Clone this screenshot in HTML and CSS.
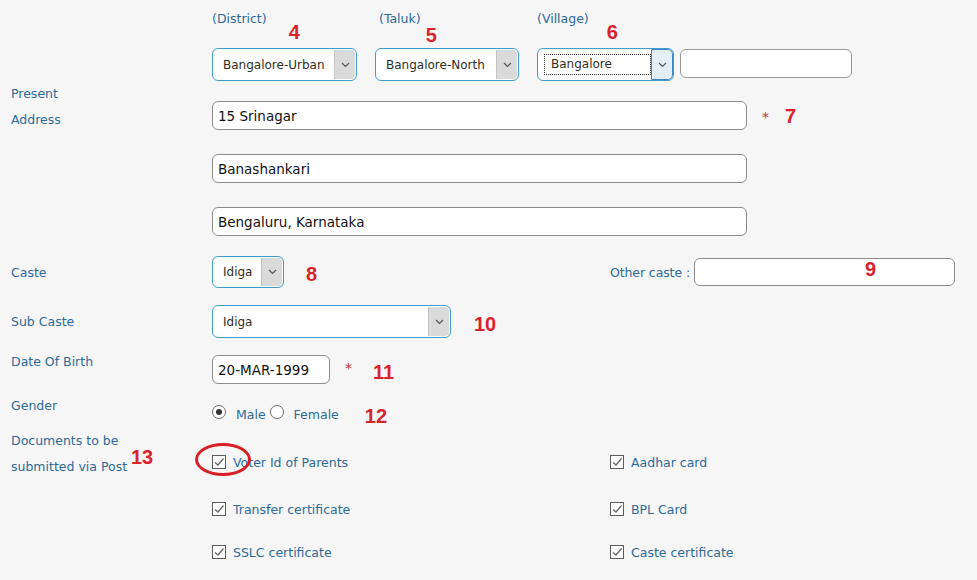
FILE: index.html
```html
<!DOCTYPE html>
<html lang="en">
<head>
    <meta charset="UTF-8">
    <title>Applicant Details</title>
    <link rel="stylesheet" href="styles.css">
</head>
<body>
    <div class="form">
        <!-- location -->
        <div class="row row-loc">
            <div class="label"></div>
            <div class="loc">
                <div class="loc-col col-district">
                    <div class="loc-head"><span class="hint">(District)</span><span class="mark m4">4</span></div>
                    <div class="select w-district"><span class="value">Bangalore-Urban</span><span class="arrow"><svg width="9" height="6" viewBox="0 0 9 6"><polyline points="1,1 4.5,4.5 8,1" /></svg></span></div>
                </div>
                <div class="loc-col col-taluk">
                    <div class="loc-head"><span class="hint hint-taluk">(Taluk)</span><span class="mark m5">5</span></div>
                    <div class="select w-taluk"><span class="value">Bangalore-North</span><span class="arrow"><svg width="9" height="6" viewBox="0 0 9 6"><polyline points="1,1 4.5,4.5 8,1" /></svg></span></div>
                </div>
                <div class="loc-col col-village">
                    <div class="loc-head"><span class="hint">(Village)</span><span class="mark m6">6</span></div>
                    <div class="loc-pair">
                        <div class="select w-village focused"><span class="value"><span class="focus-ring">Bangalore</span></span><span class="arrow"><svg width="9" height="6" viewBox="0 0 9 6"><polyline points="1,1 4.5,4.5 8,1" /></svg></span></div>
                        <div class="input w-village-extra"></div>
                    </div>
                </div>
            </div>
        </div>

        <!-- address -->
        <div class="row row-address">
            <div class="label label-lines">Present<br>Address</div>
            <div class="address">
                <div class="field"><div class="input w-address">15 Srinagar</div><span class="req">*</span><span class="mark m7">7</span></div>
                <div class="field"><div class="input w-address">Banashankari</div></div>
                <div class="field"><div class="input w-address">Bengaluru, Karnataka</div></div>
            </div>
        </div>

        <!-- caste -->
        <div class="row row-caste">
            <div class="label">Caste</div>
            <div class="col-left">
                <div class="select w-caste"><span class="value">Idiga</span><span class="arrow"><svg width="9" height="6" viewBox="0 0 9 6"><polyline points="1,1 4.5,4.5 8,1" /></svg></span></div>
                <span class="mark m8">8</span>
            </div>
            <div class="col-right other">
                <span class="other-label">Other caste :</span>
                <div class="input w-other"><span class="mark m9">9</span></div>
            </div>
        </div>

        <!-- sub caste -->
        <div class="row row-subcaste">
            <div class="label">Sub Caste</div>
            <div class="select w-subcaste"><span class="value">Idiga</span><span class="arrow"><svg width="9" height="6" viewBox="0 0 9 6"><polyline points="1,1 4.5,4.5 8,1" /></svg></span></div>
            <span class="mark m10">10</span>
        </div>

        <!-- dob -->
        <div class="row row-dob">
            <div class="label">Date Of Birth</div>
            <div class="input w-dob">20-MAR-1999</div>
            <span class="req req-dob">*</span>
            <span class="mark m11">11</span>
        </div>

        <!-- gender -->
        <div class="row row-gender">
            <div class="label">Gender</div>
            <div class="gender">
                <span class="radio checked"></span><span class="opt opt-male">Male</span>
                <span class="radio"></span><span class="opt opt-female">Female</span>
                <span class="mark m12">12</span>
            </div>
        </div>

        <!-- documents -->
        <div class="row row-docs">
            <div class="label label-lines">Documents to be<br>submitted via Post<span class="mark m13">13</span></div>
            <div class="docs">
                <div class="doc"><span class="check"><svg width="12" height="12" viewBox="0 0 12 12"><polyline points="2,6.5 5,9 10.5,2.5" /></svg></span><span class="doc-text">Voter Id of Parents</span><span class="circle"></span></div>
                <div class="doc"><span class="check"><svg width="12" height="12" viewBox="0 0 12 12"><polyline points="2,6.5 5,9 10.5,2.5" /></svg></span><span class="doc-text">Aadhar card</span></div>
                <div class="doc"><span class="check"><svg width="12" height="12" viewBox="0 0 12 12"><polyline points="2,6.5 5,9 10.5,2.5" /></svg></span><span class="doc-text">Transfer certificate</span></div>
                <div class="doc"><span class="check"><svg width="12" height="12" viewBox="0 0 12 12"><polyline points="2,6.5 5,9 10.5,2.5" /></svg></span><span class="doc-text">BPL Card</span></div>
                <div class="doc"><span class="check"><svg width="12" height="12" viewBox="0 0 12 12"><polyline points="2,6.5 5,9 10.5,2.5" /></svg></span><span class="doc-text">SSLC certificate</span></div>
                <div class="doc"><span class="check"><svg width="12" height="12" viewBox="0 0 12 12"><polyline points="2,6.5 5,9 10.5,2.5" /></svg></span><span class="doc-text">Caste certificate</span></div>
            </div>
        </div>
    </div>
</body>
</html>
```

FILE: styles.css
```css
body { margin: 0; background-color: #f6f6f6; font-family: "DejaVu Sans", Verdana, sans-serif; font-size: 12.5px; color: #2c6a99; overflow: hidden; }
.form { padding-left: 11px; }
.row { display: flex; }
.label { width: 201px; flex-shrink: 0; color: #2c6a99; }
.label-lines { line-height: 26px; }

/* red annotation numbers */
.mark { font-family: "Liberation Sans", Arial, sans-serif; font-weight: bold; font-size: 20px; color: #d8232c; line-height: 20px; }
.req { color: #c9302c; font-size: 14px; line-height: 14px; }

/* fake select */
.select { display: flex; align-items: stretch; height: 33px; box-sizing: border-box; border: 1px solid #3f9cc8; border-radius: 6px; background: #fff; overflow: hidden; font-size: 12px; color: #2e2e1e; }
.select .value { flex: 1; display: flex; align-items: center; padding-left: 10px; white-space: nowrap; overflow: hidden; }
.select .arrow { width: 20px; margin: 1px 1px 1px 0; display: flex; align-items: center; justify-content: center; background: #dadada; border-left: 1px solid #c4c4c4; border-radius: 0 4px 4px 0; }
.select .arrow polyline { fill: none; stroke: #555; stroke-width: 1.2; }
.select.focused .value { padding-left: 6px; }
.focus-ring { border: 1px dotted #333; padding: 2px 6px 3px 6px; width: 94px; }
.select.focused .arrow { background: #e4eef7; border: 1px solid #3a86c8; margin: 0; border-radius: 0 5px 5px 0; }

/* text boxes */
.input { height: 29px; box-sizing: border-box; border: 1px solid #8c8c8c; border-radius: 6px; background: #fff; font-size: 13.5px; color: #111; padding-left: 5px; display: flex; align-items: center; }

/* location row */
.row-loc { padding-top: 11px; }
.loc { display: flex; }
.loc-col { display: flex; flex-direction: column; }
.loc-head { display: flex; height: 37px; }
.hint { line-height: 16px; }
.hint-taluk { margin-left: 4px; }
.col-district { width: 163px; }
.col-taluk { width: 162px; }
.w-district { width: 145px; }
.w-taluk { width: 144px; }
.w-village { width: 137px; }
.loc-pair { display: flex; align-items: flex-start; gap: 6px; }
.w-village-extra { width: 172px; height: 29px; margin-top: 1px; border-color: #999; }
.m4 { margin: 11px 0 0 22px; }
.m5 { margin: 14px 0 0 5px; }
.m6 { margin: 11px 0 0 18px; }

/* address */
.row-address { margin-top: 0; }
.address { display: flex; flex-direction: column; gap: 24px; padding-top: 20px; }
.field { display: flex; align-items: center; }
.w-address { width: 535px; }
.field .req { margin-left: 15px; margin-top: 2px; }
.m7 { margin-left: 16px; }

/* caste */
.row-caste { margin-top: 20px; align-items: center; }
.col-left { width: 398px; display: flex; align-items: center; }
.w-caste { width: 72px; height: 32px; }
.m8 { margin-left: 22px; margin-top: 4px; }
.other { display: flex; align-items: center; }
.other-label { margin-right: 4px; letter-spacing: -0.1px; }
.w-other { width: 261px; height: 28px; position: relative; }
.m9 { position: absolute; left: 170px; top: 0; }

/* sub caste */
.row-subcaste { margin-top: 17px; align-items: center; }
.w-subcaste { width: 239px; }
.m10 { margin-left: 23px; margin-top: 4px; }

/* date of birth */
.row-dob { margin-top: 17px; align-items: flex-start; }
.row-dob .label { line-height: 14px; }
.w-dob { width: 118px; }
.req-dob { margin: 6px 0 0 15px; }
.m11 { margin: 7px 0 0 21px; }

/* gender */
.row-gender { margin-top: 14px; }
.row-gender .label { line-height: 16px; }
.gender { display: flex; align-items: center; height: 28px; margin-top: 0; }
.radio { width: 12px; height: 12px; border: 1px solid #6d6d6d; border-radius: 50%; background: #fff; position: relative; box-sizing: content-box; }
.radio.checked::after { content: ""; position: absolute; left: 3px; top: 3px; width: 6px; height: 6px; border-radius: 50%; background: #333; }
.opt { margin-top: 4px; }
.opt-male { margin: 4px 4px 0 10px; }
.opt-female { margin: 4px 0 0 10px; }
.m12 { margin: 8px 0 0 26px; }

/* documents */
.row-docs { margin-top: 2px; }
.row-docs .label { display: block; position: relative; }
.m13 { position: absolute; left: 120px; top: 19px; }
.docs { display: grid; grid-template-columns: 398px 200px; grid-template-rows: 47px 43px 43px; padding-top: 23px; }
.doc { display: flex; align-items: center; height: 22px; position: relative; }
.check { width: 12px; height: 12px; border: 1px solid #5c5c5c; background: #fff; display: flex; align-items: center; justify-content: center; }
.check polyline { fill: none; stroke: #666; stroke-width: 1.3; }
.doc-text { margin-left: 7px; }
.circle { position: absolute; left: -17px; top: -8px; width: 50px; height: 27px; border: 3.5px solid #d81f27; border-radius: 50%; }
```
